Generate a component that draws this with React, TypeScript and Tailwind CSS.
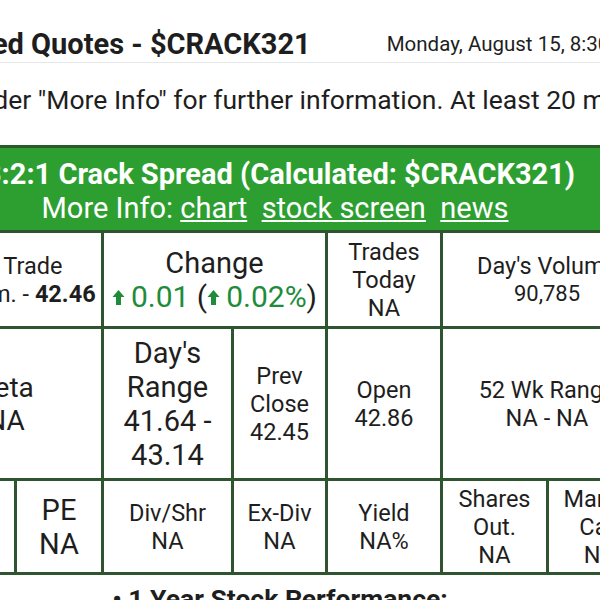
import React from "react";

const Up = () => (
  <svg width="13" height="15" viewBox="0 0 12 15" className="inline-block mr-[6px] -mt-[3px]">
    <path d="M6 0 L12 7 H8.5 V15 H3.5 V7 H0 Z" fill="#1e8c3a" />
  </svg>
);

const cell = "flex flex-col items-center justify-center text-center whitespace-nowrap border-l-[3px] border-[#2e5430] shrink-0";

const App: React.FC = () => {
  return (
    <div className="w-[600px] h-[600px] overflow-hidden bg-white text-[#1e1e1e] font-['Roboto',sans-serif]">
      {/* Header */}
      <div className="h-[63px] border-b border-gray-200 flex items-start pt-[28px] whitespace-nowrap">
        <span className="-ml-[80px] text-[29px] leading-[32px] font-bold shrink-0">Delayed Quotes - $CRACK321</span>
        <span className="ml-[76px] text-[20.5px] leading-[32px] shrink-0">Monday, August 15, 8:30 p.m.</span>
      </div>

      <p className="mt-[22px] -ml-[36px] text-[26.5px] leading-[30px] whitespace-nowrap">
        under "More Info" for further information. At least 20 minutes delayed.
      </p>

      {/* Quote table */}
      <div className="mt-[30px] -ml-[85px] w-[730px]">
        <div className="border-t-[3px] border-[#2a5a2a] bg-[#2d9f31] text-white text-center pt-[9px] pb-[5px] whitespace-nowrap">
          <div className="text-[29px] leading-[34px] font-bold">3:2:1 Crack Spread (Calculated: $CRACK321)</div>
          <div className="text-[29px] leading-[34px] pr-[10px]">
            More Info: <span className="underline">chart</span>&nbsp; <span className="underline">stock screen</span>&nbsp; <span className="underline">news</span>
          </div>
        </div>

        {/* Row 1 */}
        <div className="flex h-[96px] border-t-[3px] border-[#2e5430] text-[23.5px] leading-[28px]">
          <div className={cell + " w-[186px] border-l-0 pr-[4px]"}>
            <div>Last Trade</div>
            <div>3:59 p.m. - <b>42.46</b></div>
          </div>
          <div className={cell + " w-[224px]"}>
            <div className="text-[29px] leading-[34px]">Change</div>
            <div className="text-[30px] leading-[34px] text-[#1e8c3a]">
              <Up />0.01 <span className="text-[#1e1e1e]">(</span><Up />0.02%<span className="text-[#1e1e1e]">)</span>
            </div>
          </div>
          <div className={cell + " w-[115px]"}>
            <div>Trades</div>
            <div>Today</div>
            <div>NA</div>
          </div>
          <div className={cell + " w-[205px] pl-[6px]"}>
            <div>Day's Volume</div>
            <div className="text-[22px]">90,785</div>
          </div>
        </div>

        {/* Row 2 */}
        <div className="flex h-[152px] border-t-[3px] border-[#2e5430] text-[23.5px] leading-[28px]">
          <div className={cell + " w-[186px] border-l-0 pr-[8px] text-[28px] leading-[33px]"}>
            <div>Beta</div>
            <div>NA</div>
          </div>
          <div className={cell + " w-[130px] text-[29px] leading-[34px]"}>
            <div>Day's</div>
            <div>Range</div>
            <div>41.64 -</div>
            <div>43.14</div>
          </div>
          <div className={cell + " w-[94px]"}>
            <div>Prev</div>
            <div>Close</div>
            <div>42.45</div>
          </div>
          <div className={cell + " w-[115px]"}>
            <div>Open</div>
            <div>42.86</div>
          </div>
          <div className={cell + " w-[205px] pl-[6px]"}>
            <div>52 Wk Range</div>
            <div>NA - NA</div>
          </div>
        </div>

        {/* Row 3 */}
        <div className="flex h-[97px] border-y-[3px] border-[#2e5430] text-[23.5px] leading-[28px]">
          <div className={cell + " w-[99px] border-l-0"}>
            <div>EPS</div>
            <div>NA</div>
          </div>
          <div className={cell + " w-[87px] text-[29px] leading-[34px]"}>
            <div>PE</div>
            <div>NA</div>
          </div>
          <div className={cell + " w-[130px]"}>
            <div>Div/Shr</div>
            <div>NA</div>
          </div>
          <div className={cell + " w-[94px]"}>
            <div>Ex-Div</div>
            <div>NA</div>
          </div>
          <div className={cell + " w-[115px]"}>
            <div>Yield</div>
            <div>NA%</div>
          </div>
          <div className={cell + " w-[106px]"}>
            <div>Shares</div>
            <div>Out.</div>
            <div>NA</div>
          </div>
          <div className={cell + " w-[99px] pl-[6px]"}>
            <div>Market</div>
            <div>Cap</div>
            <div>NA</div>
          </div>
        </div>

        <div className="mt-[9px] text-center text-[26.5px] leading-[30px] font-bold whitespace-nowrap">
          • 1 Year Stock Performance:
        </div>
      </div>
    </div>
  );
};

export default App;
